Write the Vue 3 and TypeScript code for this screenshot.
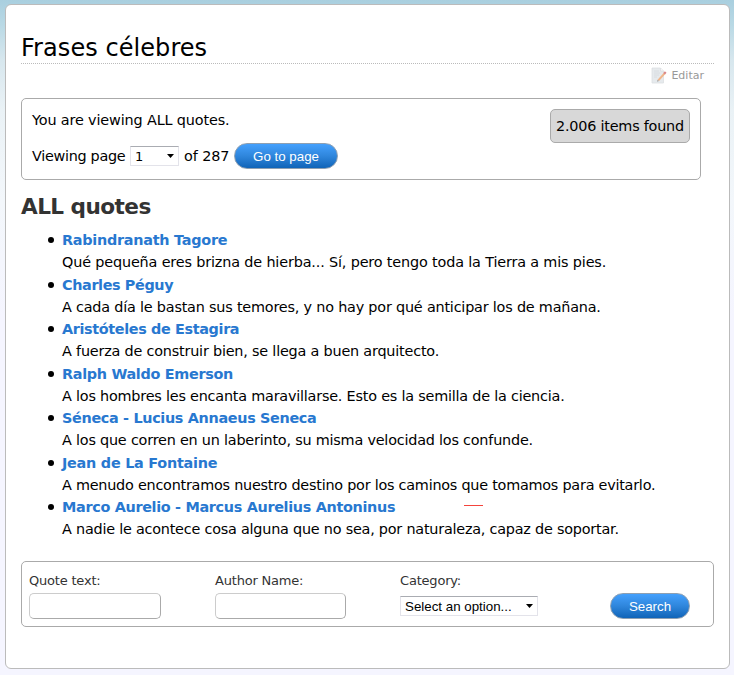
<script setup lang="ts">
import { ref } from 'vue'

interface Quote {
  author: string
  authorTracking: number
  text: string
  textTracking: number
}

const quotes: Quote[] = [
  { author: 'Rabindranath Tagore', authorTracking: -0.26, text: 'Qué pequeña eres brizna de hierba... Sí, pero tengo toda la Tierra a mis pies.', textTracking: -0.154 },
  { author: 'Charles Péguy', authorTracking: -0.38, text: 'A cada día le bastan sus temores, y no hay por qué anticipar los de mañana.', textTracking: -0.2 },
  { author: 'Aristóteles de Estagira', authorTracking: -0.36, text: 'A fuerza de construir bien, se llega a buen arquitecto.', textTracking: -0.2 },
  { author: 'Ralph Waldo Emerson', authorTracking: -0.31, text: 'A los hombres les encanta maravillarse. Esto es la semilla de la ciencia.', textTracking: -0.21 },
  { author: 'Séneca - Lucius Annaeus Seneca', authorTracking: -0.33, text: 'A los que corren en un laberinto, su misma velocidad los confunde.', textTracking: -0.21 },
  { author: 'Jean de La Fontaine', authorTracking: -0.25, text: 'A menudo encontramos nuestro destino por los caminos que tomamos para evitarlo.', textTracking: -0.237 },
  { author: 'Marco Aurelio - Marcus Aurelius Antoninus', authorTracking: -0.32, text: 'A nadie le acontece cosa alguna que no sea, por naturaleza, capaz de soportar.', textTracking: -0.22 },
]

const page = ref('1')
const quoteText = ref('')
const authorName = ref('')
const category = ref('')
</script>

<template>
  <div class="backdrop">
    <main class="panel">
      <h1><span>Frases célebres</span></h1>
      <div class="edit-row">
        <a class="edit">
          <svg width="16" height="17" viewBox="0 0 16 17">
            <path d="M1 1h8.5l3 3v12H1z" fill="#e6eaed" stroke="#dcdfe2" stroke-width=".8" />
            <path d="M9.5 1v3h3" fill="#f7f7f7" stroke="#d6dadd" stroke-width=".6" />
            <path d="M3 4h5M3 6h6M3 8h5M3 10h3" stroke="#d5dade" stroke-width=".8" />
            <path d="M7.3 13.3l6.3-7" stroke="#f0b58a" stroke-width="2" />
            <path d="M13.2 6.7l1.5-1.7" stroke="#d98585" stroke-width="2.2" />
            <path d="M6 14.7l.6-2 1.4 1.2z" fill="#a0a0a0" />
          </svg>
          <span>Editar</span>
        </a>
      </div>

      <section class="summary">
        <div class="summary-main">
          <p class="viewing">You are viewing ALL quotes.</p>
          <div class="pager">
            <span class="pager-label">Viewing page</span>
            <span class="select page-select">
              <select v-model="page" aria-label="Page"><option>1</option></select>
              <svg class="arrow" width="7" height="4" viewBox="0 0 7 4"><path d="M0 0h7L3.5 4z" /></svg>
            </span>
            <span class="pager-total">of 287</span>
            <button class="go" type="button">Go to page</button>
          </div>
        </div>
        <div class="found"><span>2.006 items found</span></div>
      </section>

      <h2><span>ALL quotes</span></h2>
      <ul class="quotes">
        <li v-for="q in quotes" :key="q.author">
          <div class="author"><a :style="{ letterSpacing: q.authorTracking + 'px' }">{{ q.author }}</a></div>
          <div class="text"><span :style="{ letterSpacing: q.textTracking + 'px' }">{{ q.text }}</span></div>
        </li>
      </ul>
      <i class="mark"></i>

      <form class="search" @submit.prevent>
        <label class="field">
          <span>Quote text:</span>
          <input v-model="quoteText" type="text" />
        </label>
        <label class="field author-field">
          <span>Author Name:</span>
          <input v-model="authorName" type="text" />
        </label>
        <label class="field category">
          <span>Category:</span>
          <span class="select category-select">
            <select v-model="category"><option value="">Select an option...</option></select>
            <svg class="arrow" width="7" height="4" viewBox="0 0 7 4"><path d="M0 0h7L3.5 4z" /></svg>
          </span>
        </label>
        <button class="submit" type="submit">Search</button>
      </form>
    </main>
  </div>
</template>

<style>
body { margin: 0; }
</style>

<style scoped>
* { box-sizing: border-box; }
.backdrop {
  height: 675px;
  padding: 4px 4px 0 5px;
  overflow: hidden;
  background: linear-gradient(#a9cfdf 0, #b9d9e5 25px, #d7e7ee 60px, #eaf2f6 110px, #f3f7fb 200px, #f5f5ff 320px);
  font-family: Verdana, "DejaVu Sans", sans-serif;
  font-size: 14.4px;
  color: #000;
}
.panel {
  position: relative;
  height: 665px;
  padding: 0 15px;
  border: 1px solid #bbb;
  border-radius: 6px;
  background: #fff;
}
h1 {
  margin: 0;
  height: 59px;
  padding-top: 28px;
  border-bottom: 1px dotted #bbb;
  font-size: 24px;
  line-height: 30px;
  font-weight: normal;
  letter-spacing: 0.06px;
}
.edit-row {
  display: flex;
  justify-content: flex-end;
  height: 34px;
  padding: 3px 10px 0 0;
}
.edit {
  display: flex;
  align-items: flex-start;
  gap: 4px;
  font-size: 11px;
  line-height: 17px;
  color: #999;
}
.summary {
  display: flex;
  justify-content: space-between;
  width: 680px;
  height: 82px;
  padding: 10px;
  border: 1px solid #aaa;
  border-radius: 5px;
}
.viewing { margin: 0; line-height: 22px; letter-spacing: -0.14px; }
.pager {
  display: flex;
  align-items: center;
  height: 26px;
  margin-top: 12px;
}
.pager-label { width: 93px; letter-spacing: -0.3px; white-space: nowrap; }
.page-select { margin: 0 5px; }
.pager-total { width: 45px; margin-right: 5px; letter-spacing: -0.1px; white-space: nowrap; }
.found {
  width: 140px;
  height: 34px;
  border: 1px solid #aaa;
  border-radius: 5px;
  background: #d8d8d8;
  line-height: 32px;
  text-align: center;
  letter-spacing: -0.22px;
  white-space: nowrap;
}
.select {
  display: flex;
  align-items: center;
  height: 20px;
  border: 1px solid #e3e3ea;
  border-top-color: #aaacb2;
  background: #fff;
}
.select select {
  appearance: none;
  flex: 1;
  min-width: 0;
  height: 18px;
  padding: 0 0 0 4px;
  border: 0;
  background: none;
  font: 13.33px "Liberation Sans", sans-serif;
  color: #000;
}
.page-select { width: 49px; }
.page-select select { font-family: Verdana, "DejaVu Sans", sans-serif; font-size: 13px; }
.arrow { margin-right: 4px; flex: none; }
button {
  height: 26px;
  padding: 0;
  border: 1px solid #8d9fb2;
  border-radius: 13px;
  background: linear-gradient(#44a0fd, #2f86dc 50%, #1064b8);
  color: #fff;
  font: 13.33px "Liberation Sans", sans-serif;
}
.go { width: 104px; }
h2 {
  margin: 13px 0 0;
  font-size: 21.6px;
  line-height: 28px;
  letter-spacing: -0.55px;
  color: #333;
}
.quotes {
  margin: 8px 0 0;
  padding: 0 0 0 41px;
  height: 312px;
  list-style: none;
}
.quotes li { height: 44.5px; line-height: 22.25px; white-space: nowrap; }
.author { display: flex; align-items: center; margin-left: -14px; }
.author::before {
  content: "";
  width: 6px;
  height: 6px;
  margin-right: 8px;
  border-radius: 50%;
  background: #000;
}
.author a { font-weight: bold; color: #2878d0; }
.mark {
  position: absolute;
  left: 458px;
  top: 500px;
  width: 19px;
  height: 1px;
  background: #f4443c;
}
.search {
  display: flex;
  height: 66px;
  margin-top: 20px;
  padding: 9px 7px 0;
  border: 1px solid #aaa;
  border-radius: 5px;
}
.field {
  display: flex;
  flex-direction: column;
  width: 186px;
  font-size: 13px;
  line-height: 20px;
  letter-spacing: -0.2px;
  color: #333;
}
.field input {
  width: 132px;
  height: 26px;
  margin: 2px 0 0;
  padding: 3px 5px;
  border: 1px solid #aaa;
  border-top-color: #ccc;
  border-left-color: #ccc;
  border-radius: 5px;
  outline: 0;
}
.author-field { width: 185px; }
.author-field input { width: 131px; }
.category { width: 210px; }
.category-select { width: 138px; margin-top: 5px; }
.submit { width: 80px; margin-top: 22px; }
</style>
